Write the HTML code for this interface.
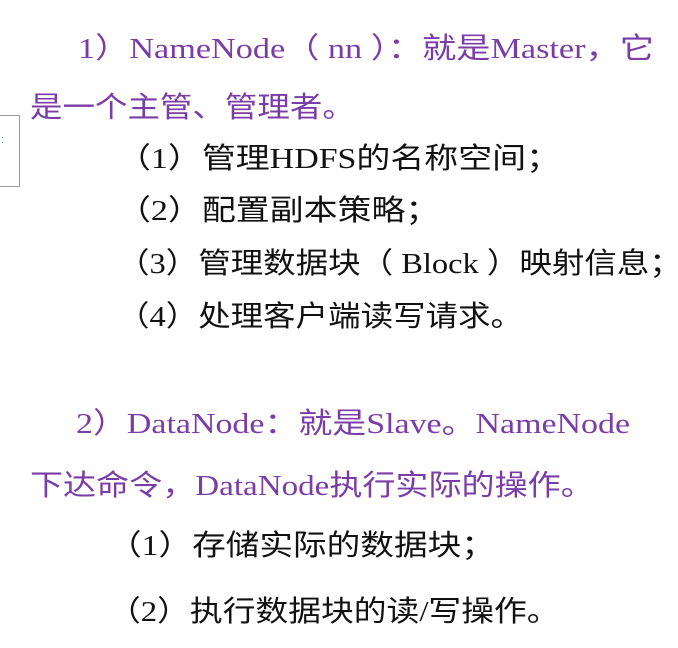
<!DOCTYPE html>
<html><head><meta charset="utf-8"><style>
html,body{margin:0;padding:0;width:678px;height:648px;background:#fff;overflow:hidden;position:relative}
.l{position:absolute;white-space:nowrap;font-family:"Liberation Serif","Noto Sans CJK SC",serif;line-height:1;transform-origin:0 50%}
.p{color:#7a3ca6;font-size:29px}
.b{color:#111;font-size:29px}
.box{position:absolute;left:-2px;top:115px;width:20px;height:70px;border:1px solid #999;background:#fff}
</style></head><body>
<div class="box"><span style="position:absolute;left:2px;top:18px;color:#7a9bc0;font-size:11px;font-family:'Liberation Sans',sans-serif">:</span></div>
<div class="l p" style="left:78px;top:35px;transform:scaleX(1.18)">1）NameNode（ nn ）：就是Master，它</div>
<div class="l p" style="left:30px;top:94px;transform:scaleX(1.12)">是一个主管、管理者。</div>
<div class="l b" style="left:117px;top:145px;transform:scaleX(1.17)">（1）管理HDFS的名称空间；</div>
<div class="l b" style="left:117px;top:197px;transform:scaleX(1.17)">（2）配置副本策略；</div>
<div class="l b" style="left:117px;top:250px;transform:scaleX(1.12)">（3）管理数据块（ Block ）映射信息；</div>
<div class="l b" style="left:117px;top:303px;transform:scaleX(1.12)">（4）处理客户端读写请求。</div>
<div class="l p" style="left:76px;top:410px;transform:scaleX(1.17)">2）DataNode：就是Slave。NameNode</div>
<div class="l p" style="left:30px;top:472px;transform:scaleX(1.14)">下达命令，DataNode执行实际的操作。</div>
<div class="l b" style="left:108px;top:532px;transform:scaleX(1.16)">（1）存储实际的数据块；</div>
<div class="l b" style="left:108px;top:598px;transform:scaleX(1.13)">（2）执行数据块的读/写操作。</div>
</body></html>
